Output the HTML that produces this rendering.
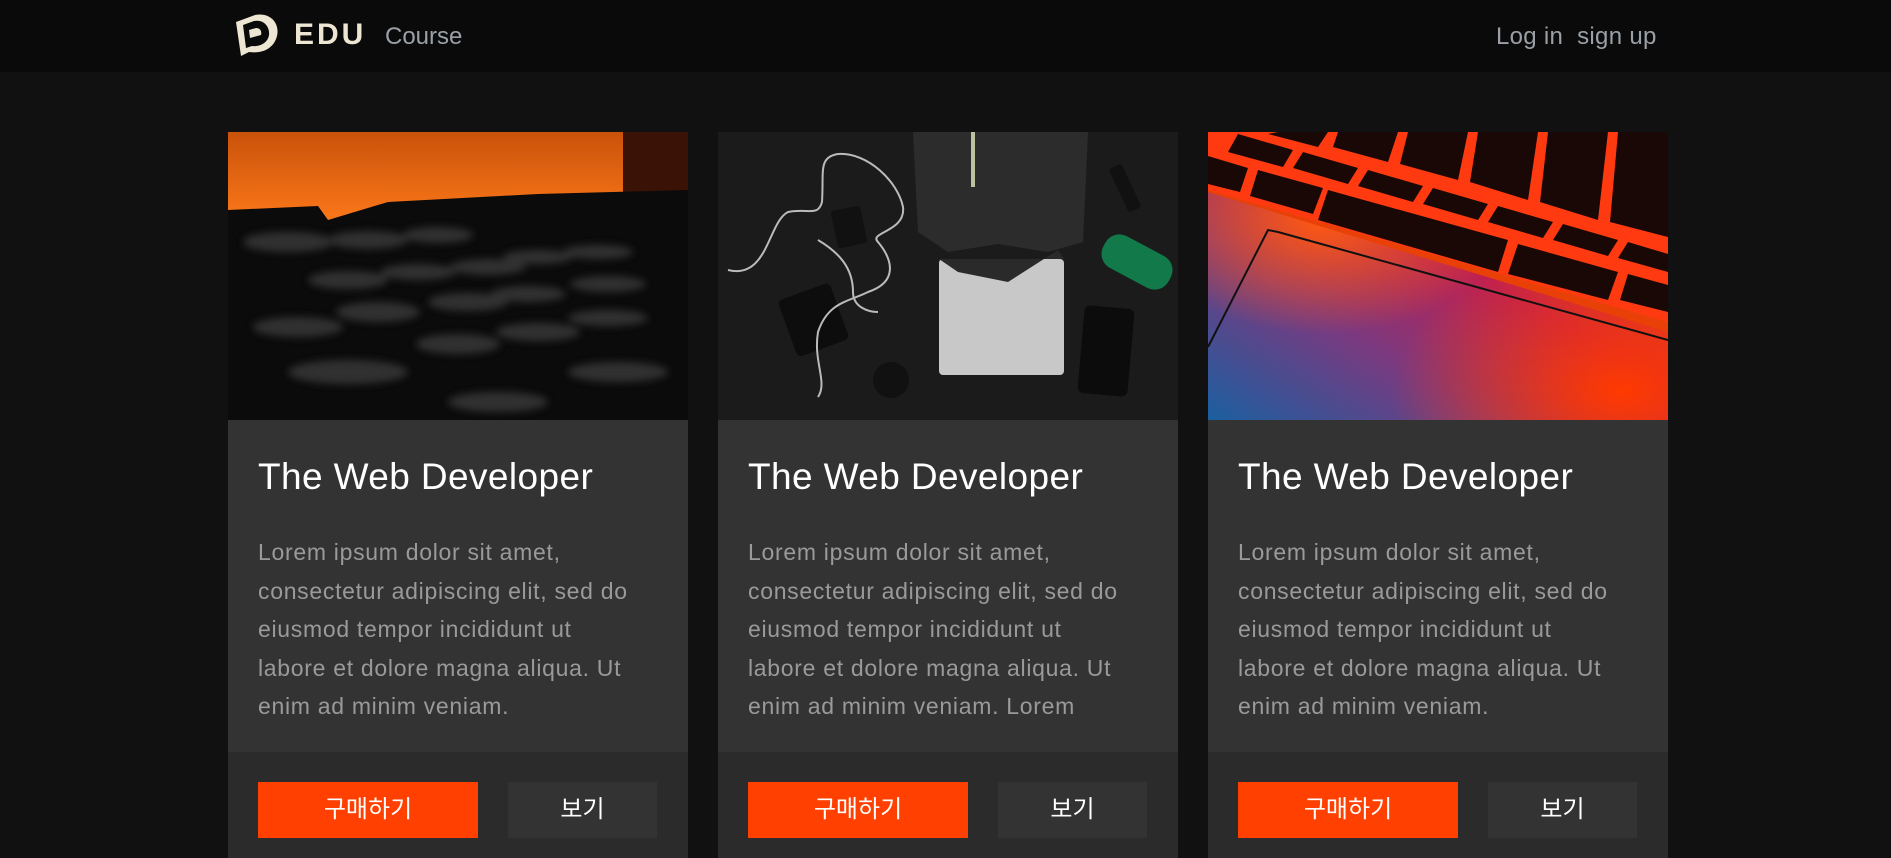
<!DOCTYPE html>
<html><head><meta charset="utf-8"><style>
*{margin:0;padding:0;box-sizing:border-box}
body{width:1891px;height:858px;overflow:hidden;background:#111;font-family:"Liberation Sans","Noto Sans CJK KR",sans-serif}
.hdr{position:absolute;left:0;top:0;width:1891px;height:72px;background:#0a0a0a}
.logo{position:absolute;left:233px;top:10px}
.edu{position:absolute;left:294px;top:18px;color:#ede6d2;font-size:30px;font-weight:bold;letter-spacing:3px}
.course{position:absolute;left:385px;top:23px;color:#9aa0a6;font-size:24px}
.nav{position:absolute;left:1496px;top:23px;color:#9aa0a6;font-size:24px;white-space:nowrap;letter-spacing:.3px}
.card{position:absolute;top:132px;width:460px;height:726px;background:#333}
.img{position:absolute;left:0;top:0;width:460px;height:288px;overflow:hidden}
h2{position:absolute;left:30px;top:323px;color:#fff;font-weight:normal;font-size:37px;line-height:44px;white-space:nowrap;letter-spacing:.4px}
p{position:absolute;left:30px;top:401px;width:425px;color:#9a9a9a;font-size:23px;letter-spacing:.7px;line-height:38.5px;height:193px;overflow:hidden;white-space:nowrap}
.ft{position:absolute;left:0;top:620px;width:460px;height:106px;background:#2b2b2b}
.buy{position:absolute;left:30px;top:30px;width:220px;height:56px;background:#ff4000;color:#fff;font-size:24px;text-align:center;line-height:56px}
.view{position:absolute;left:280px;top:30px;width:149px;height:56px;background:#333;color:#fff;font-size:24px;text-align:center;line-height:56px}
</style></head><body>
<div class="hdr">
<svg class="logo" width="48" height="48" viewBox="0 0 48 48"><path d="M3 12 L22 5 C38 2 47 14 44 26 C41 38 30 44 16 42 L8 46 Z" fill="#ede6d2"/><path d="M10 15 L21 11 C31 9 37 17 36 25 C35 32 28 37 19 36 L13 38 Z" fill="#0a0a0a"/><path d="M16 20 L23 18 C27 18 29 21 28 25 L17 28 Z" fill="#ede6d2"/></svg>
<div class="edu">EDU</div>
<div class="course">Course</div>
<div class="nav">Log in&nbsp; sign up</div>
</div>

<div class="card" style="left:228px">
<div class="img"><svg width="460" height="288" viewBox="0 0 460 288">
<defs><linearGradient id="o" x1="0" y1="0" x2="0" y2="1"><stop offset="0" stop-color="#c9520a"/><stop offset="1" stop-color="#ff7a1a"/></linearGradient>
<filter id="b" x="-20%" y="-20%" width="140%" height="140%"><feGaussianBlur stdDeviation="4"/></filter></defs>
<rect width="460" height="288" fill="#050505"/>
<rect width="460" height="95" fill="url(#o)"/>
<rect x="395" width="65" height="70" fill="#3a1206"/>
<path d="M0 78 L90 74 L100 88 L160 70 L310 62 L460 58 L460 288 L0 288Z" fill="#0b0b0b"/>
<g fill="#3a3a3a" opacity=".8" filter="url(#b)"><ellipse cx="60" cy="110" rx="45" ry="10"/><ellipse cx="140" cy="108" rx="40" ry="9"/><ellipse cx="210" cy="103" rx="35" ry="8"/><ellipse cx="120" cy="148" rx="40" ry="9"/><ellipse cx="190" cy="140" rx="38" ry="8"/><ellipse cx="260" cy="135" rx="38" ry="8"/><ellipse cx="310" cy="125" rx="35" ry="7"/><ellipse cx="370" cy="120" rx="35" ry="7"/><ellipse cx="150" cy="180" rx="42" ry="10"/><ellipse cx="240" cy="170" rx="40" ry="9"/><ellipse cx="300" cy="162" rx="38" ry="8"/><ellipse cx="380" cy="152" rx="38" ry="8"/><ellipse cx="70" cy="195" rx="45" ry="10"/><ellipse cx="230" cy="212" rx="42" ry="10"/><ellipse cx="310" cy="200" rx="42" ry="9"/><ellipse cx="380" cy="186" rx="40" ry="8"/><ellipse cx="120" cy="240" rx="60" ry="12"/><ellipse cx="390" cy="240" rx="50" ry="10"/><ellipse cx="270" cy="270" rx="50" ry="10"/></g>
</svg></div>
<h2>The Web Developer</h2>
<p>Lorem ipsum dolor sit amet,<br>consectetur adipiscing elit, sed do<br>eiusmod tempor incididunt ut<br>labore et dolore magna aliqua. Ut<br>enim ad minim veniam.</p>
<div class="ft"><div class="buy">구매하기</div><div class="view">보기</div></div>
</div>

<div class="card" style="left:718px">
<div class="img"><svg width="460" height="288" viewBox="0 0 460 288">
<rect width="460" height="288" fill="#1b1b1b"/>
<path d="M195 0 L370 0 L365 110 L330 120 L280 112 L230 120 L200 100 Z" fill="#2c2c2c"/>
<rect x="253" y="0" width="4" height="55" fill="#bcc2a0"/>
<rect x="221" y="127" width="125" height="116" rx="4" fill="#c8c8c8"/>
<path d="M221 127 L346 127 L340 118 L290 150 L240 140 Z" fill="#2a2a2a"/>
<rect x="68" y="158" width="55" height="60" rx="5" fill="#0d0d0d" transform="rotate(-20 95 188)"/>
<rect x="116" y="76" width="30" height="38" rx="3" fill="#111" transform="rotate(-12 131 95)"/>
<rect x="363" y="175" width="50" height="88" rx="6" fill="#0c0c0c" transform="rotate(5 388 219)"/>
<rect x="382" y="112" width="74" height="36" rx="16" fill="#127a4a" transform="rotate(28 419 130)"/>
<rect x="400" y="32" width="14" height="48" rx="3" fill="#111" transform="rotate(-25 407 56)"/>
<circle cx="173" cy="248" r="18" fill="#111"/>
<path d="M10 138 C50 148 50 90 70 80 C90 76 100 85 104 70 C106 40 100 25 120 22 C150 20 180 50 185 75 C188 100 150 100 160 110 C175 128 180 150 150 160 C130 170 110 170 100 200 C95 230 110 250 100 265" stroke="#bbb" stroke-width="2" fill="none"/>
<path d="M100 108 C120 120 135 135 135 160 C135 175 150 180 160 180" stroke="#bbb" stroke-width="2" fill="none"/>
</svg></div>
<h2>The Web Developer</h2>
<p>Lorem ipsum dolor sit amet,<br>consectetur adipiscing elit, sed do<br>eiusmod tempor incididunt ut<br>labore et dolore magna aliqua. Ut<br>enim ad minim veniam. Lorem</p>
<div class="ft"><div class="buy">구매하기</div><div class="view">보기</div></div>
</div>

<div class="card" style="left:1208px">
<div class="img"><svg width="460" height="288" viewBox="0 0 460 288">
<defs>
<linearGradient id="g1" x1="0" y1="1" x2="1" y2="0"><stop offset="0" stop-color="#1a5fa0"/><stop offset=".3" stop-color="#7a3a80"/><stop offset=".55" stop-color="#c02050"/><stop offset=".8" stop-color="#e84a10"/><stop offset="1" stop-color="#ff5a00"/></linearGradient>
<radialGradient id="g2" cx=".9" cy=".9" r=".5"><stop offset="0" stop-color="#ff3a00"/><stop offset="1" stop-color="#ff3a00" stop-opacity="0"/></radialGradient>
<radialGradient id="g3" cx=".25" cy=".3" r=".4"><stop offset="0" stop-color="#ff5a10"/><stop offset="1" stop-color="#ff5a10" stop-opacity="0"/></radialGradient>
</defs>
<rect width="460" height="288" fill="url(#g1)"/>
<rect width="460" height="288" fill="url(#g2)"/>
<rect width="460" height="288" fill="url(#g3)"/>
<path d="M0 0 L460 0 L460 200 L0 60 Z" fill="#e94008"/>
<path d="M0 0 L460 0 L460 190 L0 58 Z" fill="#ff3a10"/>
<g fill="#1a0806">
<path d="M30 2 L85 18 L75 35 L20 20Z"/><path d="M95 20 L150 36 L140 52 L85 36Z"/><path d="M160 38 L215 54 L205 70 L150 54Z"/><path d="M225 56 L280 72 L270 88 L215 72Z"/><path d="M290 74 L345 90 L335 106 L280 90Z"/><path d="M355 92 L410 108 L400 124 L345 108Z"/><path d="M420 110 L460 122 L460 140 L410 126Z"/>
<path d="M0 24 L40 36 L32 60 L0 52Z"/><path d="M50 38 L115 56 L105 82 L42 64Z"/><path d="M120 58 L300 108 L290 140 L110 88Z"/><path d="M310 112 L410 140 L400 168 L300 142Z"/><path d="M420 142 L460 153 L460 180 L412 168Z"/>
<path d="M70 0 L120 0 L110 15 L60 2Z"/><path d="M130 0 L190 0 L180 30 L125 15Z"/><path d="M200 0 L260 0 L250 48 L192 32Z"/><path d="M270 0 L330 0 L320 68 L262 50Z"/><path d="M340 0 L400 0 L390 88 L332 70Z"/><path d="M410 0 L460 0 L460 105 L402 90Z"/>
</g>
<path d="M70 100 L60 98 L0 215" stroke="#111" stroke-width="2" fill="none"/>
<path d="M70 100 L460 208" stroke="#111" stroke-width="2" fill="none"/>
</svg></div>
<h2>The Web Developer</h2>
<p>Lorem ipsum dolor sit amet,<br>consectetur adipiscing elit, sed do<br>eiusmod tempor incididunt ut<br>labore et dolore magna aliqua. Ut<br>enim ad minim veniam.</p>
<div class="ft"><div class="buy">구매하기</div><div class="view">보기</div></div>
</div>
</body></html>
